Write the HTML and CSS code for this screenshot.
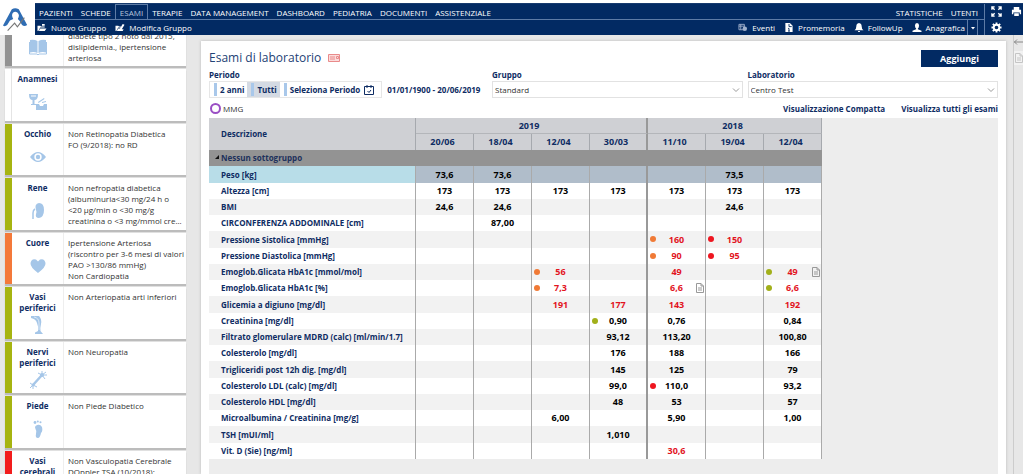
FILE: index.html
```html
<!DOCTYPE html>
<html lang="it">
<head>
<meta charset="utf-8">
<title>Esami di laboratorio</title>
<link rel="stylesheet" href="styles.css">
</head>
<body>
<svg class="sprite" aria-hidden="true">
  <symbol id="doc" viewBox="0 0 8 10"><path d="M.5.5h4.500l2.500 2.500v6.500h-7zM5 .5v2.500h2.500M2 5h4M2 7h4" fill="none" stroke="#999"/></symbol>
  <symbol id="chev" viewBox="0 0 8 6"><path d="M1 1.500l3 3 3-3" fill="none" stroke="#999"/></symbol>
</svg>
<header class="top">
  <a class="logo" href="#" aria-label="Home">
    <svg viewBox="0 0 28 26"><path d="M9.500 2Q13-.5 17 2L26 19Q23 21 20.500 19L18 14.500 16 12.500Q18.500 8 15.500 5.500 13 4 11 5.500 8.500 8 11 12.500L7.500 14 4.500 19Q2 21 0 19.500Z" fill="#2f6db4"/><path d="M5 25L12.500 17 15.500 21 23 11" fill="none" stroke="#777" stroke-width="1.200"/></svg>
  </a>
  <div class="bars">
    <div class="left">
      <nav class="menu">
        <a href="#">PAZIENTI</a><a href="#">SCHEDE</a><a href="#" class="on">ESAMI</a><a href="#">TERAPIE</a><a href="#">DATA MANAGEMENT</a><a href="#">DASHBOARD</a><a href="#">PEDIATRIA</a><a href="#">DOCUMENTI</a><a href="#">ASSISTENZIALE</a>
        <a href="#" class="push">STATISTICHE</a><a href="#">UTENTI</a>
      </nav>
      <div class="tools">
        <button><svg viewBox="0 0 10 10"><path d="M0 3h3l1 1h4v1H3L1 9H0zM3 6h7L8 9H1.500zM5 1h3v2H5z" fill="#fff"/></svg>Nuovo Gruppo</button>
        <button><svg viewBox="0 0 10 10"><path d="M0 3h3l1 1h2v1H3L1 9H0zM3 6h2l3-5 2 1-3 5h2L8 9H1.500z" fill="#fff"/></svg>Modifica Gruppo</button>
        <button class="push"><svg viewBox="0 0 10 10"><path d="M.5 1.500h6v6h-6zM.5 3.500h6M2.500 1.500v6" fill="none" stroke="#9fb0cc"/><circle cx="7" cy="6.500" r="2.500" fill="#9fb0cc"/></svg>Eventi</button>
        <button><svg viewBox="0 0 10 10"><path d="M1 0h5l3 3v7H1z" fill="#fff"/><path d="M5 1v3h3M4 6h1v3M4 9h2" fill="none" stroke="#022a63"/></svg>Promemoria</button>
        <button><svg viewBox="0 0 10 10"><path d="M5 0q3 .5 3 4 0 3 2 4H0q2-1 2-4 0-3.500 3-4zM4 9h2v1H4z" fill="#fff"/></svg>FollowUp</button>
        <button><svg viewBox="0 0 10 10"><ellipse cx="5" cy="3" rx="2.300" ry="3" fill="#fff"/><path d="M4 5h2v2l4 1.500V10H0V8.500L4 7z" fill="#fff"/></svg>Anagrafica</button>
        <button class="drop" aria-label="Altro"><svg viewBox="0 0 6 4"><path d="M1 1h4L3 3.500z" fill="#fff"/></svg></button>
      </div>
    </div>
    <div class="right">
      <button aria-label="Schermo intero"><svg viewBox="0 0 12 12"><path d="M1 4V1h3M8 1h3v3M11 8v3H8M4 11H1V8M1 1l3 3M11 1L8 4M11 11L8 8M1 11l3-3" fill="none" stroke="#fff" stroke-width="1.500"/></svg></button>
      <button aria-label="Stampa"><svg viewBox="0 0 12 12"><path d="M3 1h6v3H3zM1 4h10v5H9.500V7h-7v2H1zM3.500 8h5v3h-5z" fill="#fff"/></svg></button>
      <button aria-label="Impostazioni"><svg viewBox="0 0 12 12"><path d="M6 .5v11M.5 6h11M2 2l8 8M10 2l-8 8" stroke="#fff" stroke-width="2"/><circle cx="6" cy="6" r="3" fill="#022a63" stroke="#fff" stroke-width="2"/></svg></button>
    </div>
  </div>
</header>
<div class="page">
  <aside class="side">
    <section class="card grey"><h2><span></span><svg viewBox="0 0 18 18"><path d="M1 2q4-1 7.500 1v12Q5 13.500 1 14.500zM17 2q-4-1-7.500 1v12q3.500-1.500 7.500-.5z" fill="#a5c6e8"/><path d="M0.500 4v12h7.500l1 1 1-1h7.500V4" fill="none" stroke="#a5c6e8"/></svg></h2><p>diabete tipo 2 noto dal 2015,<br>dislipidemia., ipertensione<br>arteriosa</p></section>
    <section class="card none"><h2><span>Anamnesi</span><svg viewBox="0 0 18 18"><path d="M0 1h9Q9 7 5.500 7v4H8v1H2v-1h1.500V7Q0 7 0 1zM7 11h3l1 2h3l1-2h3v6H7zM9 9l6-4 .5 1-6 4zM13 9l4-1v1l-4 1z" fill="#a5c6e8"/><path d="M2 2.500h5v1H2z" fill="#fff"/></svg></h2><p></p></section>
    <section class="card green"><h2><span>Occhio</span><svg viewBox="0 0 18 18"><path d="M1 9q8-10 16 0-8 10-16 0z" fill="#a5c6e8"/><circle cx="9" cy="9" r="3.700" fill="#fff"/><circle cx="9" cy="9" r="2.200" fill="#a5c6e8"/></svg></h2><p>Non Retinopatia Diabetica<br>FO (9/2018): no RD</p></section>
    <section class="card green"><h2><span>Rene</span><svg viewBox="0 0 18 18"><path d="M10 1q5 0 5 7t-5 8q-4 0-3-4 1-2 0-4-2-6 3-7z" fill="#a5c6e8"/><path d="M6 7q-2 1-2 4v6" fill="none" stroke="#a5c6e8" stroke-width="1.500"/></svg></h2><p>Non nefropatia diabetica<br>(albuminuria&lt;30 mg/24 h o<br>&lt;20 µg/min o &lt;30 mg/g<br>creatinina o &lt;3 mg/mmol cre...</p></section>
    <section class="card orange"><h2><span>Cuore</span><svg viewBox="0 0 18 18"><path d="M9 16Q1 10 1.500 6 2.500 1 7 2.500L9 4.500l2-2Q15.500 1 16.500 6 17 10 9 16z" fill="#a5c6e8"/></svg></h2><p>Ipertensione Arteriosa<br>(riscontro per 3-6 mesi di valori<br>PAO &gt;130/86 mmHg)<br>Non Cardiopatia</p></section>
    <section class="card green two"><h2><span>Vasi<br>periferici</span><svg viewBox="0 0 18 18"><path d="M2 0h8q3 3 2 8-1 4-.5 7l2.500 3H6v-1.500l3-1.500Q9.500 10 8 7 7 3 2 2z" fill="#a5c6e8"/><path d="M5 1q5 1 5 6v7" fill="none" stroke="#dce9f6"/></svg></h2><p>Non Arteriopatia arti inferiori</p></section>
    <section class="card green two"><h2><span>Nervi<br>periferici</span><svg viewBox="0 0 18 18"><path d="M4 14l9-10" stroke="#a5c6e8" stroke-width="2.500"/><path d="M13 4V0M13 4l4-3M13 4h5M13 4l3 4M13 4L9 2M4 14l-3-2M4 14l-3 3M4 14v4M4 14l4 2" stroke="#a5c6e8"/><circle cx="13" cy="4" r="2" fill="#a5c6e8"/><circle cx="4" cy="14" r="1.500" fill="#a5c6e8"/></svg></h2><p>Non Neuropatia</p></section>
    <section class="card green"><h2><span>Piede</span><svg viewBox="0 0 18 18"><path d="M6.500 6q4-3 6.500 1 1 4-1 6-1 5-3 5-3 0-2-4 1-3-.5-5-1-2 0-3z" fill="#a5c6e8"/><circle cx="6" cy="2.500" r="1.400" fill="#a5c6e8"/><circle cx="8.800" cy="1.500" r="1" fill="#a5c6e8"/><circle cx="11.500" cy="2.200" r="1" fill="#a5c6e8"/></svg></h2><p>Non Piede Diabetico</p></section>
    <section class="card red two"><h2><span>Vasi<br>cerebrali</span></h2><p>Non Vasculopatia Cerebrale<br>DOppler TSA (10/2018):</p></section>
  </aside>
  <main class="panel">
    <div class="head">
      <h1>Esami di laboratorio</h1>
      <svg class="tag" viewBox="0 0 12 8"><path d="M.5.5h11v7H.5zM2 3h5M2 5h5M8.500 2.500h2v2h-2z" fill="#fbdcdc" stroke="#e98a8a"/></svg>
      <button class="add">Aggiungi</button>
    </div>
    <div class="filters">
      <div class="field"><span class="lbl">Periodo</span>
        <div class="period">
          <div class="group"><button>2 anni</button><button class="on">Tutti</button><button>Seleziona Periodo<svg viewBox="0 0 10 10"><path d="M.5 1.500h9v8h-9zM3 0v3M7 0v3M3.500 6l1.500 1.500L7 5" fill="none" stroke="#0e2c63"/></svg></button></div>
          <span class="range">01/01/1900 - 20/06/2019</span>
        </div>
      </div>
      <div class="field"><label class="lbl" for="gruppo">Gruppo</label><div class="sel"><select id="gruppo"><option>Standard</option></select><svg><use href="#chev"/></svg></div></div>
      <div class="field"><label class="lbl" for="lab">Laboratorio</label><div class="sel"><select id="lab"><option>Centro Test</option></select><svg><use href="#chev"/></svg></div></div>
    </div>
    <div class="views">
      <input type="radio" id="mmg"><label for="mmg">MMG</label>
      <a href="#" class="push">Visualizzazione Compatta</a><a href="#">Visualizza tutti gli esami</a>
    </div>
    <div class="scroll">
      <table>
        <colgroup><col class="desc"><col span="7"></colgroup>
        <thead>
          <tr><th rowspan="2" class="name">Descrizione</th><th colspan="4" class="yr">2019</th><th colspan="3" class="yr">2018</th></tr>
          <tr><th>20/06</th><th>18/04</th><th>12/04</th><th class="end">30/03</th><th>11/10</th><th>19/04</th><th>12/04</th></tr>
          <tr class="sub"><th colspan="8"><svg viewBox="0 0 5 5"><path d="M5 0v5H0z" fill="#111"/></svg>Nessun sottogruppo</th></tr>
        </thead>
        <tbody>
          <tr class="cur"><th>Peso [kg]</th><td>73,6</td><td>73,6</td><td></td><td></td><td></td><td>73,5</td><td></td></tr>
          <tr><th>Altezza [cm]</th><td>173</td><td>173</td><td>173</td><td>173</td><td>173</td><td>173</td><td>173</td></tr>
          <tr><th>BMI</th><td>24,6</td><td>24,6</td><td></td><td></td><td></td><td>24,6</td><td></td></tr>
          <tr><th>CIRCONFERENZA ADDOMINALE [cm]</th><td></td><td>87,00</td><td></td><td></td><td></td><td></td><td></td></tr>
          <tr><th>Pressione Sistolica [mmHg]</th><td></td><td></td><td></td><td></td><td class="hi"><i class="o"></i>160</td><td class="hi"><i class="r"></i>150</td><td></td></tr>
          <tr><th>Pressione Diastolica [mmHg]</th><td></td><td></td><td></td><td></td><td class="hi"><i class="o"></i>90</td><td class="hi"><i class="r"></i>95</td><td></td></tr>
          <tr><th>Emoglob.Glicata HbA1c [mmol/mol]</th><td></td><td></td><td class="hi"><i class="o"></i>56</td><td></td><td class="hi">49</td><td></td><td class="hi"><i class="g"></i>49<svg><use href="#doc"/></svg></td></tr>
          <tr><th>Emoglob.Glicata HbA1c [%]</th><td></td><td></td><td class="hi"><i class="o"></i>7,3</td><td></td><td class="hi">6,6<svg><use href="#doc"/></svg></td><td></td><td class="hi"><i class="g"></i>6,6</td></tr>
          <tr><th>Glicemia a digiuno [mg/dl]</th><td></td><td></td><td class="hi">191</td><td class="hi">177</td><td class="hi">143</td><td></td><td class="hi">192</td></tr>
          <tr><th>Creatinina [mg/dl]</th><td></td><td></td><td></td><td><i class="g"></i>0,90</td><td>0,76</td><td></td><td>0,84</td></tr>
          <tr><th>Filtrato glomerulare MDRD (calc) [ml/min/1.7]</th><td></td><td></td><td></td><td>93,12</td><td>113,20</td><td></td><td>100,80</td></tr>
          <tr><th>Colesterolo [mg/dl]</th><td></td><td></td><td></td><td>176</td><td>188</td><td></td><td>166</td></tr>
          <tr><th>Trigliceridi post 12h dig. [mg/dl]</th><td></td><td></td><td></td><td>145</td><td>125</td><td></td><td>79</td></tr>
          <tr><th>Colesterolo LDL (calc) [mg/dl]</th><td></td><td></td><td></td><td>99,0</td><td><i class="r"></i>110,0</td><td></td><td>93,2</td></tr>
          <tr><th>Colesterolo HDL [mg/dl]</th><td></td><td></td><td></td><td>48</td><td>53</td><td></td><td>57</td></tr>
          <tr><th>Microalbumina / Creatinina [mg/g]</th><td></td><td></td><td>6,00</td><td></td><td>5,90</td><td></td><td>1,00</td></tr>
          <tr><th>TSH [mUI/ml]</th><td></td><td></td><td></td><td>1,010</td><td></td><td></td><td></td></tr>
          <tr><th>Vit. D (Sie) [ng/ml]</th><td></td><td></td><td></td><td></td><td class="hi">30,6</td><td></td><td></td></tr>
        </tbody>
      </table>
    </div>
  </main>
  <aside class="strip">
    <svg class="arrows" viewBox="0 0 10 8"><path d="M0 4h10M3 1.500L.500 4 3 6.500M9 2l1 .5M9 6l1-.5" fill="none" stroke="#888"/></svg>
    <button aria-label="Note"><svg viewBox="0 0 8 10"><use href="#doc" opacity=".5"/></svg></button>
  </aside>
</div>
</body>
</html>
```
FILE: styles.css
```css
* { box-sizing: border-box; }
html, body { height: 100%; }
body {
  margin: 0;
  display: flex;
  flex-direction: column;
  overflow: hidden;
  background: #e7e7e7;
  color: #333;
  font-family: "Open Sans", "Noto Sans", sans-serif;
  font-size: 8px;
  line-height: 11px;
  white-space: nowrap;
}
h1, h2, p { margin: 0; }
a { color: inherit; text-decoration: none; }
button, select, input { font: inherit; color: inherit; margin: 0; padding: 0; border: 0; background: none; border-radius: 0; }
button { display: flex; align-items: center; justify-content: center; }
.sprite { display: none; }
.push { margin-left: auto; }

.top { display: flex; background: #fff; padding-top: 3px; height: 35px; flex: none; position: relative; z-index: 1; }
.logo { width: 35px; padding: 4px 4px 0 3px; }
.logo svg { display: block; width: 26px; height: 25px; }
.bars { flex: 1; display: flex; background: #022a63; color: #fff; border-top: 1px solid #163a6e; }
.left { flex: 1; border-right: 1px solid #5d7ba6; }
.menu { display: flex; height: 16px; border-bottom: 1px solid #5d7ba6; padding-right: 2px; }
.menu a { padding: 0 4px; line-height: 17px; }
.menu .on { border: 1px solid #5d7ba6; border-bottom: 0; padding: 0 4px; line-height: 15px; color: #b8c6dc; }
.tools { display: flex; height: 15px; align-items: stretch; padding: 0 6px 0 2px; gap: 9px; }
.tools svg { width: 10px; height: 9px; margin-right: 4px; }
.tools .drop { width: 11px; border: 1px solid #5d7ba6; border-width: 0 1px; margin-left: -7px; }
.tools .drop svg { width: 6px; height: 4px; margin: 0; }
.right { width: 38px; display: grid; grid-template-columns: 18px 18px; gap: 0 2px; padding-left: 2px; }
.right svg { width: 11px; height: 11px; }

.page { flex: 1; min-height: 0; display: flex; }
.side {
  width: 181px;
  margin: -21px 0 0 5px;
  display: grid;
  grid-template-columns: minmax(0, 1fr);
  grid-template-rows: 52px repeat(4, 52px 51px);
  gap: 3px;
  flex: none;
}
.card { display: grid; grid-template-columns: 7px 52px minmax(0, 1fr); background: #fff; box-shadow: 0 2px 1px #bcbcbc; }
.card::before { content: ""; background: #a6b410; }
.card.grey::before { background: #929292; }
.card.none::before { background: #fff; border-right: 1px solid #e4e4e4; }
.card.orange::before { background: #f4793a; }
.card.red::before { background: #f21d1d; }
.card h2 { padding-top: 4px; font-size: 8px; font-weight: 700; color: #0e2c63; text-align: center; border-right: 1px solid #eee; }
.card h2 span { display: block; min-height: 11px; }
.card svg { display: block; width: 18px; height: 18px; margin: 9px auto 0; }
.card.two svg { margin-top: 3px; }
.card p { padding: 4px 0 0 4px; }
.card.grey p { align-self: end; padding-bottom: 3px; }

.panel { flex: 1; min-width: 0; margin: 6px 7px 0 15px; padding: 8px 8px 0; background: #fff; box-shadow: 0 0 3px #bbb; display: flex; flex-direction: column; }
.head { display: flex; align-items: center; gap: 7px; height: 18px; }
.head h1 { font-size: 12px; font-weight: 400; line-height: 18px; color: #234275; }
.tag { width: 12px; height: 8px; }
.add { margin-left: auto; width: 77px; height: 17px; background: #022a63; color: #fff; font-weight: 700; font-size: 9px; }
.filters { display: grid; grid-template-columns: 278px 1fr 1fr; gap: 5px; padding-top: 2px; }
.lbl { display: block; font-weight: 700; color: #0e2c63; line-height: 12px; }
.period { display: flex; align-items: center; gap: 5px; color: #0e2c63; font-weight: 700; }
.group { display: flex; height: 17px; border: 1px solid #e6e6e6; }
.group button { padding: 0 3px 0 4px; }
.group button:last-child { padding-right: 7px; }
.group button::before { content: ""; width: 3px; height: 13px; background: #a9c8ea; margin-right: 3px; }
.group .on { background: #d4dae3; }
.group svg { width: 10px; height: 10px; margin-left: 4px; }
.sel { position: relative; }
.sel select { display: block; width: 100%; height: 17px; border: 1px solid #e2e2e2; padding: 0 2px; appearance: none; background: #fff; }
.sel svg { position: absolute; right: 3px; top: 6px; width: 8px; height: 6px; }
.views { display: flex; align-items: center; height: 20px; color: #0e2c63; font-weight: 700; }
.views input { appearance: none; width: 11px; height: 11px; border: 2px solid #9a4fc4; border-radius: 50%; margin-right: 2px; margin-left: 1px; }
.views label { color: #333; font-weight: 400; }
.views a + a { margin-left: 16px; }

.scroll { flex: 1; min-height: 0; background: #ededed; }
table { table-layout: fixed; width: 613px; border-collapse: separate; border-spacing: 0; font-size: 9px; font-weight: 700; }
col { width: 58px; }
col.desc { width: 207px; }
th, td { height: 16px; padding: 0; line-height: 14px; text-align: center; color: #000; border-right: 1px solid #aaa; }
th { color: #0e2c63; }
thead th { background: #cfd0d4; padding-right: 4px; border-right-color: #a6a9ae; }
thead .yr { border-bottom: 1px solid #b4b6ba; }
.yr:nth-child(2), .end, td:nth-child(5) { border-right: 2px solid #999; }
th.name, tbody th, .sub th { text-align: left; padding-left: 12px; font-size: 8px; }
.sub th { background: #939393; color: #1d315c; padding-left: 6px; border-right: 0; }
.sub svg { width: 4px; height: 4px; margin: 0 2px 2px 0; }
tbody tr:nth-child(odd) { background: #f2f2f2; }
tbody tr:nth-child(even) { background: #fff; }
tbody tr:nth-child(4n+1) > * { height: 17px; }
tbody .cur td { background: #b0bdca; }
tbody .cur th { background: #b8dde8; }
td { position: relative; }
td.hi { color: #e2141e; }
td i { position: absolute; left: 2px; top: 5px; width: 6px; height: 6px; border-radius: 50%; }
td .o { background: #f07a36; }
td .r { background: #ee1620; }
td .g { background: #a2b01a; }
td svg { position: absolute; right: 1px; top: 3px; width: 8px; height: 10px; }

.strip { width: 10px; flex: none; border-left: 1px solid #ccc; padding-top: 3px; }
.strip .arrows { display: block; width: 10px; height: 8px; }
.strip button { width: 10px; height: 14px; margin-top: 5px; background: #f2f2f2; }
.strip button svg { width: 8px; height: 10px; }
```
